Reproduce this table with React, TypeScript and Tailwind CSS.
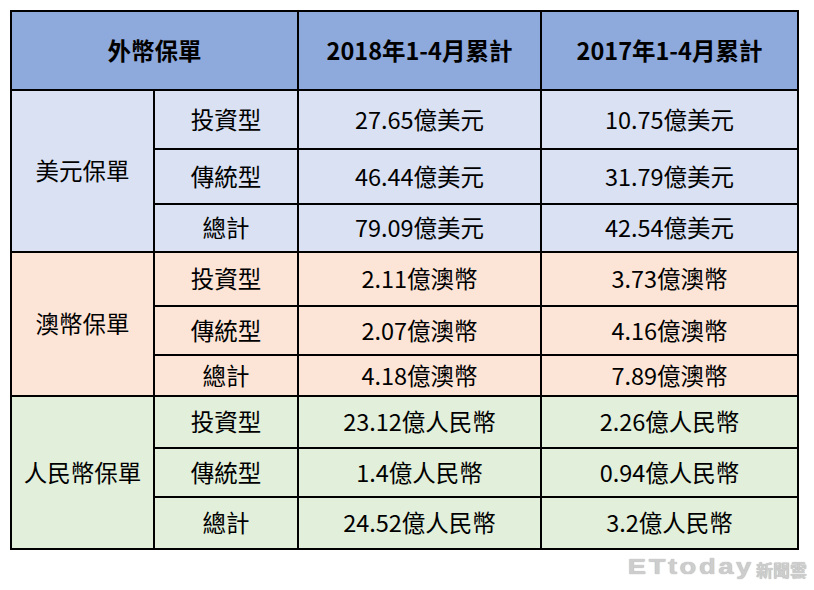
import React from "react"

type Group = {
  name: string
  bg: string
  rows: { label: string; y2018: string; y2017: string; h: string }[]
}

const groups: Group[] = [
  {
    name: "美元保單",
    bg: "bg-[#d9e1f2]",
    rows: [
      { label: "投資型", y2018: "27.65億美元", y2017: "10.75億美元", h: "h-[59px]" },
      { label: "傳統型", y2018: "46.44億美元", y2017: "31.79億美元", h: "h-[55px]" },
      { label: "總計", y2018: "79.09億美元", y2017: "42.54億美元", h: "h-[48px]" },
    ],
  },
  {
    name: "澳幣保單",
    bg: "bg-[#fce4d6]",
    rows: [
      { label: "投資型", y2018: "2.11億澳幣", y2017: "3.73億澳幣", h: "h-[54px]" },
      { label: "傳統型", y2018: "2.07億澳幣", y2017: "4.16億澳幣", h: "h-[49px]" },
      { label: "總計", y2018: "4.18億澳幣", y2017: "7.89億澳幣", h: "h-[41px]" },
    ],
  },
  {
    name: "人民幣保單",
    bg: "bg-[#e2efda]",
    rows: [
      { label: "投資型", y2018: "23.12億人民幣", y2017: "2.26億人民幣", h: "h-[52px]" },
      { label: "傳統型", y2018: "1.4億人民幣", y2017: "0.94億人民幣", h: "h-[49px]" },
      { label: "總計", y2018: "24.52億人民幣", y2017: "3.2億人民幣", h: "h-[52px]" },
    ],
  },
]

const cell = "border-2 border-black text-center align-middle p-0"

export default function App() {
  return (
    <div className="w-[814px] h-[590px] bg-white relative font-['Noto_Sans_CJK_TC','Noto_Sans',sans-serif] text-black">
      <div className="pt-[10px] pl-[10px]">
        <table className="border-collapse table-fixed w-[787px] text-[23.5px] leading-none">
          <colgroup>
            <col className="w-[143px]" />
            <col className="w-[144px]" />
            <col className="w-[243px]" />
            <col className="w-[257px]" />
          </colgroup>
          <thead>
            <tr className="h-[79px] bg-[#8ea9db] font-bold">
              <th colSpan={2} className={cell}>外幣保單</th>
              <th className={cell}>2018年1-4月累計</th>
              <th className={cell}>2017年1-4月累計</th>
            </tr>
          </thead>
          <tbody>
            {groups.map((g) =>
              g.rows.map((r, i) => (
                <tr key={g.name + r.label} className={`${r.h} ${g.bg}`}>
                  {i === 0 && (
                    <td rowSpan={3} className={cell}>
                      {g.name}
                    </td>
                  )}
                  <td className={cell}>{r.label}</td>
                  <td className={cell}>{r.y2018}</td>
                  <td className={cell}>{r.y2017}</td>
                </tr>
              ))
            )}
          </tbody>
        </table>
      </div>

      {/* watermark */}
      <div className="absolute right-[7px] top-[556px] flex items-end text-[#cdcdcd] [text-shadow:0_0_1px_#a0a0a0]">
        <span className="font-['Liberation_Sans',sans-serif] font-bold text-[22px] leading-none tracking-[2px] scale-x-[1.25] origin-right mr-[2px]">
          ETtoday
        </span>
        <span className="font-['Noto_Sans_CJK_TC',sans-serif] font-bold text-[17px] leading-none">新聞雲</span>
      </div>
    </div>
  )
}
